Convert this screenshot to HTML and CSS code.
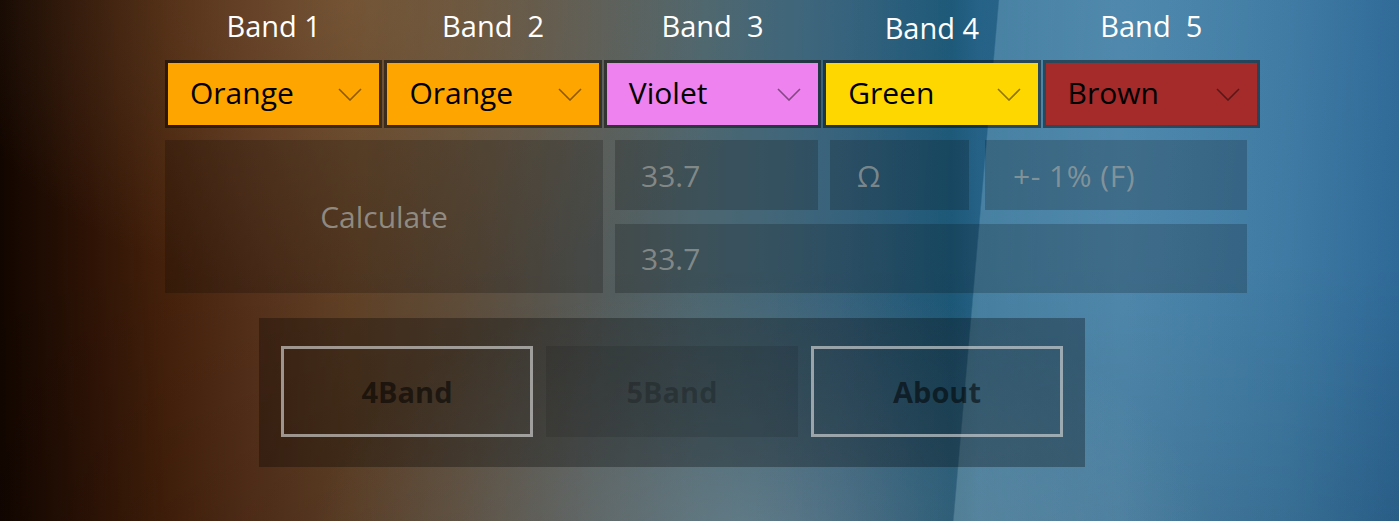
FILE: index.html
```html
<!DOCTYPE html>
<html>
<head>
<meta charset="utf-8">
<link rel="stylesheet" href="styles.css">
</head>
<body>
<div class="app">
  <div class="bands">
    <div class="band">
      <div class="label">Band 1</div>
      <div class="select orange"><span>Orange</span><svg class="chev" viewBox="0 0 24 13"><polyline points="1,1 12,12 23,1"/></svg></div>
    </div>
    <div class="band">
      <div class="label">Band  2</div>
      <div class="select orange"><span>Orange</span><svg class="chev" viewBox="0 0 24 13"><polyline points="1,1 12,12 23,1"/></svg></div>
    </div>
    <div class="band">
      <div class="label">Band  3</div>
      <div class="select violet"><span>Violet</span><svg class="chev" viewBox="0 0 24 13"><polyline points="1,1 12,12 23,1"/></svg></div>
    </div>
    <div class="band">
      <div class="label low">Band 4</div>
      <div class="select gold"><span>Green</span><svg class="chev" viewBox="0 0 24 13"><polyline points="1,1 12,12 23,1"/></svg></div>
    </div>
    <div class="band">
      <div class="label">Band  5</div>
      <div class="select brown"><span>Brown</span><svg class="chev" viewBox="0 0 24 13"><polyline points="1,1 12,12 23,1"/></svg></div>
    </div>
  </div>

  <div class="results">
    <div class="calc">Calculate</div>
    <div class="outputs">
      <div class="out-row">
        <div class="field value">33.7</div>
        <div class="field unit">Ω</div>
        <div class="field tol">+- 1% (F)</div>
      </div>
      <div class="field full">33.7</div>
    </div>
  </div>

  <div class="nav">
    <div class="navbtn outlined">4Band</div>
    <div class="navbtn faint">5Band</div>
    <div class="navbtn outlined">About</div>
  </div>
</div>
</body>
</html>
```

FILE: styles.css
```css
html, body {
  margin: 0;
  padding: 0;
  width: 1399px;
  height: 521px;
  overflow: hidden;
}

body {
  font-family: "Open Sans", "Noto Sans", sans-serif;
  background:
    linear-gradient(95deg, rgba(0,0,0,0) 0%, rgba(0,0,0,0) 55%, rgba(0,30,60,0.16) 69.1%, rgba(255,255,255,0.13) 69.2%, rgba(255,255,255,0.10) 80%, rgba(0,0,0,0.04) 100%),
    radial-gradient(ellipse 420px 300px at 360px 0px, rgba(150,120,80,0.35), rgba(150,120,80,0) 100%),
    radial-gradient(ellipse 450px 260px at 760px 540px, rgba(170,190,200,0.32), rgba(170,190,200,0) 100%),
    linear-gradient(0deg, rgba(0,0,0,0.10) 0%, rgba(0,0,0,0) 50%),
    linear-gradient(90deg, #120600 0%, #2c1205 6%, #45210b 12%, #55301a 18%, #614126 25%, #5f4d3a 33%, #575b58 42%, #4c6670 50%, #3a6680 60%, #226282 68%, #2c6e94 70%, #3a7aa2 80%, #3676a2 92%, #2f6c9c 100%);
}

.app {
  width: 1095px;
  margin-left: 165px;
  padding-top: 4px;
}

.bands {
  display: grid;
  grid-template-columns: repeat(5, 1fr);
  column-gap: 2px;
}

.band {
  display: flex;
  flex-direction: column;
  align-items: stretch;
}

.label {
  color: #fff;
  font-size: 29px;
  line-height: 44px;
  height: 44px;
  text-align: center;
  white-space: pre;
  margin-bottom: 12px;
}

.label.low {
  transform: translateY(2px);
}

.select {
  height: 62px;
  border: 3px solid rgba(0,0,0,0.45);
  background-clip: padding-box;
  display: flex;
  align-items: center;
  justify-content: space-between;
  padding: 0 17px 0 22px;
  font-size: 30px;
  color: #000;
}

.select span {
  line-height: 1;
  margin-top: -2px;
}

.chev {
  width: 24px;
  height: 13px;
  fill: none;
  stroke: rgba(0,0,0,0.45);
  stroke-width: 1.6;
}

.orange { background-color: #ffa500; }
.violet { background-color: #ee82ee; }
.gold { background-color: #ffd700; }
.brown { background-color: #a52a2a; }

.results {
  display: flex;
  gap: 12px;
  margin-top: 12px;
  width: 1082px;
}

.calc {
  width: 438px;
  height: 153px;
  background: rgba(0,0,0,0.2);
  color: rgba(170,170,165,0.72);
  font-size: 30px;
  display: flex;
  align-items: center;
  justify-content: center;
}

.outputs {
  flex: 1;
  display: flex;
  flex-direction: column;
  gap: 14px;
}

.out-row {
  display: flex;
  gap: 12px;
}

.field {
  height: 70px;
  background: rgba(0,0,0,0.2);
  color: rgba(170,170,165,0.65);
  font-size: 30px;
  display: flex;
  align-items: center;
  padding-left: 26px;
  box-sizing: border-box;
}

.field.value { width: 203px; }
.field.unit { width: 139px; padding-left: 27px; }
.field.tol { flex: 1; margin-left: 4px; padding-left: 28px; letter-spacing: 0.5px; }
.field.full { height: 69px; }

.nav {
  margin-top: 25px;
  margin-left: 94px;
  width: 826px;
  height: 149px;
  box-sizing: border-box;
  padding: 28px 22px 0 22px;
  background: rgba(0,0,0,0.3);
  display: flex;
  gap: 13px;
}

.navbtn {
  width: 252px;
  height: 91px;
  box-sizing: border-box;
  display: flex;
  align-items: center;
  justify-content: center;
  font-weight: 700;
  font-size: 29px;
  color: rgba(0,0,0,0.55);
}

.navbtn.outlined {
  border: 3px solid rgba(220,220,220,0.62);
}

.navbtn.faint {
  background: rgba(0,0,0,0.1);
  color: rgba(0,0,0,0.22);
}
```
